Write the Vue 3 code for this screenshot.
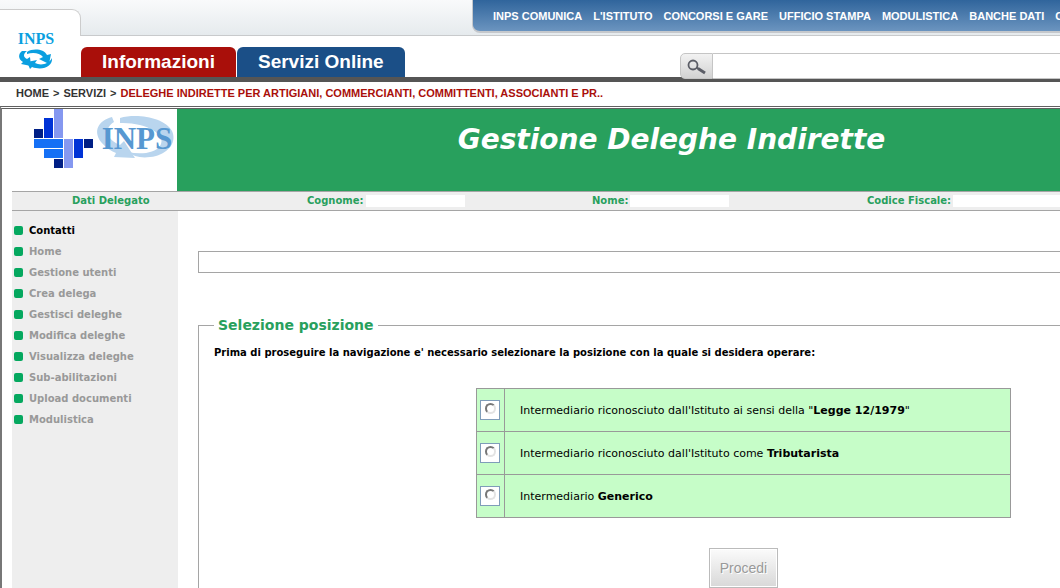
<script setup>
import { ref } from 'vue'

const query = ref('')
const position = ref('')
const topLinks = ['INPS COMUNICA', "L'ISTITUTO", 'CONCORSI E GARE', 'UFFICIO STAMPA', 'MODULISTICA', 'BANCHE DATI', 'C']
const menu = ['Contatti', 'Home', 'Gestione utenti', 'Crea delega', 'Gestisci deleghe', 'Modifica deleghe', 'Visualizza deleghe', 'Sub-abilitazioni', 'Upload documenti', 'Modulistica']
const options = [
  { id: 'legge', before: 'Intermediario riconosciuto dall\'Istituto ai sensi della "', strong: 'Legge 12/1979', after: '"' },
  { id: 'tributarista', before: "Intermediario riconosciuto dall'Istituto come ", strong: 'Tributarista', after: '' },
  { id: 'generico', before: 'Intermediario ', strong: 'Generico', after: '' },
]
</script>

<template>
  <div class="page">
    <header class="header">
      <a class="brand" href="#" aria-label="INPS">
        <svg width="36" height="48" viewBox="0 0 36 48">
          <text x="18" y="21" text-anchor="middle" class="brand-text">INPS</text>
          <path d="M4 28C0 31 0 36 5 39L3 41L13 43L12 34L9 36C5 34 5 31 9 28Z" fill="#0a9fe0" />
          <path d="M9 29C15 25 26 26 29 32L33 31L31 41L21 36L25 34C22 30 15 29 9 31Z" fill="#0a9fe0" />
          <path d="M34 35C35 43 25 48 14 44L12 46L9 39L19 37L17 40C23 43 31 41 34 35Z" fill="#0a9fe0" />
        </svg>
      </a>
      <div class="header-main">
        <div class="strip">
          <nav class="top-nav">
            <a v-for="l in topLinks" :key="l" href="#">{{ l }}</a>
          </nav>
        </div>
        <div class="tabs-row">
          <nav class="tabs">
            <a class="tab red" href="#">Informazioni</a>
            <a class="tab blue" href="#">Servizi Online</a>
          </nav>
          <form class="search" @submit.prevent>
            <button type="submit" aria-label="Cerca">
              <svg width="20" height="18" viewBox="0 0 20 18" fill="none" stroke="#5b5d66">
                <circle cx="6" cy="6" r="4.5" stroke-width="1.8" />
                <path d="M9.5 8.5L12 10" stroke-width="2" />
                <path d="M11 9.5L18 14" stroke-width="3" />
              </svg>
            </button>
            <input v-model="query" type="text" aria-label="Testo da cercare" />
          </form>
        </div>
      </div>
    </header>

    <nav class="crumbs">
      <a href="#">HOME</a><span>&gt;</span><a href="#">SERVIZI</a><span>&gt;</span>
      <a class="current" href="#">DELEGHE INDIRETTE PER ARTIGIANI, COMMERCIANTI, COMMITTENTI, ASSOCIANTI E PR..</a>
    </nav>

    <div class="frame">
      <div class="banner">
        <div class="banner-logo">
          <svg width="144" height="60" viewBox="0 0 144 60" role="img" aria-label="INPS">
            <rect x="0" y="20" width="9" height="9" fill="#001f85" />
            <rect x="10" y="9" width="9" height="20" fill="#0033d6" />
            <rect x="20" y="0" width="9" height="29" fill="#8598f0" />
            <rect x="0" y="30" width="29" height="9" fill="#1570f5" />
            <rect x="10" y="40" width="19" height="9" fill="#1570f5" />
            <rect x="20" y="50" width="9" height="9" fill="#001f85" />
            <rect x="30" y="30" width="9" height="29" fill="#8598f0" />
            <rect x="40" y="30" width="9" height="19" fill="#0033d6" />
            <rect x="50" y="30" width="9" height="9" fill="#001f85" />
            <path d="M78 8C64 12 59 22 67 33C71 38 77 42 82 44L80 48L101 49L90 32L86 36C73 31 69 20 80 13Z" fill="#b9d5ee" />
            <path d="M86 9C104 4 131 9 138 22C143 33 135 43 122 47C109 50 100 48 94 43C107 46 121 44 126 37C134 25 111 13 86 14Z" fill="#b9d5ee" />
            <text x="103" y="40" text-anchor="middle" class="banner-text">INPS</text>
          </svg>
        </div>
        <h1>Gestione Deleghe Indirette</h1>
      </div>

      <div class="data-bar">
        <div class="data-title">Dati Delegato</div>
        <div class="datum">Cognome:<span class="blank"></span></div>
        <div class="datum">Nome:<span class="blank"></span></div>
        <div class="datum">Codice Fiscale:<span class="blank wide"></span></div>
      </div>

      <div class="body">
        <nav class="side">
          <ul>
            <li v-for="(m, i) in menu" :key="m">
              <a href="#" :class="{ active: i === 0 }">{{ m }}</a>
            </li>
          </ul>
        </nav>
        <main class="content">
          <div class="message"></div>
          <form @submit.prevent>
            <fieldset>
              <legend>Selezione posizione</legend>
              <p>Prima di proseguire la navigazione e' necessario selezionare la posizione con la quale si desidera operare:</p>
              <div class="choice">
                <table>
                  <tbody>
                    <tr v-for="o in options" :key="o.id">
                      <td class="pick"><input :id="o.id" v-model="position" type="radio" name="position" :value="o.id" /></td>
                      <td><label :for="o.id">{{ o.before }}<b>{{ o.strong }}</b>{{ o.after }}</label></td>
                    </tr>
                  </tbody>
                </table>
                <button class="go" type="submit" :disabled="!position">Procedi</button>
              </div>
            </fieldset>
          </form>
        </main>
      </div>
    </div>
  </div>
</template>

<style>
body { margin: 0; background: #fff; }
</style>

<style scoped>
.page {
  display: flex;
  flex-direction: column;
  min-height: 100vh;
  overflow: hidden;
  font-family: "DejaVu Sans", Verdana, sans-serif;
  font-size: 10px;
  color: #000;
}
a { text-decoration: none; color: inherit; }
.header {
  display: flex;
  background: linear-gradient(#f9fafb, #e5eaed) 0 0 / 100% 36px no-repeat;
  border-bottom: 5px solid #555;
  font-family: "Liberation Sans", Arial, sans-serif;
}
.brand {
  box-sizing: border-box;
  width: 81px;
  margin-top: 9px;
  padding: 13px 0 0 18px;
  border: 1px solid #ccc;
  border-width: 1px 1px 0 0;
  border-radius: 0 9px 0 0;
  background: #fff;
}
.brand svg { display: block; }
.brand-text { font: bold 16px "Liberation Serif", serif; fill: #0a9fe0; }
.header-main { flex: 1; min-width: 0; margin-left: -1px; }
.strip {
  box-sizing: border-box;
  height: 36px;
  margin-left: 1px;
  padding-left: 391px;
  border-bottom: 1px solid #c8cacc;
}
.top-nav {
  display: flex;
  gap: 11px;
  height: 31px;
  padding-left: 20px;
  overflow: hidden;
  white-space: nowrap;
  border: 1px solid #c5c8cc;
  border-width: 0 0 2px 1px;
  border-radius: 0 0 0 8px;
  background: linear-gradient(#30659c, #6b94bf);
  color: #fff;
  font-size: 11px;
  font-weight: bold;
  line-height: 32px;
}
.top-nav a { flex: none; }
.tabs-row {
  display: flex;
  align-items: flex-end;
  height: 41px;
  padding-left: 1px;
  background: #fff;
}
.tabs { display: flex; gap: 1px; }
.tab {
  height: 30px;
  padding: 0 21px;
  border-radius: 6px 6px 0 0;
  color: #fff;
  font-size: 19px;
  font-weight: bold;
  line-height: 29px;
}
.red { background: #a90f0a; }
.blue { background: #1b4f87; }
.search {
  flex: 1;
  display: flex;
  height: 26px;
  margin: 0 0 -2px 275px;
}
.search button {
  box-sizing: border-box;
  width: 33px;
  padding: 4px 0 0 6px;
  border: 1px solid #c5c5c5;
  border-radius: 5px 0 0 5px;
  background: linear-gradient(#f2f2f2, #d2d2d2);
}
.search svg { display: block; }
.search input {
  flex: 1;
  min-width: 0;
  padding: 0 6px;
  border: 1px solid #c5c5c5;
  border-width: 1px 0;
  background: #fff;
}
.crumbs {
  display: flex;
  gap: 4px;
  height: 24px;
  padding-left: 16px;
  font: bold 11px/22px "Liberation Sans", Arial, sans-serif;
  color: #333;
  white-space: nowrap;
}
.current { color: #a90f0a; }
.frame {
  flex: 1;
  display: flex;
  flex-direction: column;
  padding-left: 10px;
  border-top: 3px double #606060;
  border-left: 2px solid #777;
}
.banner { display: flex; height: 82px; }
.banner-logo { width: 143px; padding-left: 22px; }
.banner-logo svg { display: block; }
.banner-text { font: bold 31px "Liberation Serif", serif; fill: #5798d1; }
h1 {
  flex: 1;
  box-sizing: border-box;
  margin: 0;
  padding: 0 0 18px 106px;
  background: #28a05d;
  color: #fff;
  font-size: 28px;
  font-style: italic;
  line-height: 62px;
  text-align: center;
  white-space: nowrap;
}
.data-bar {
  display: grid;
  grid-template-columns: 295fr 285fr 275fr 193fr;
  border: 1px solid #a5a5a5;
  border-width: 1px 0;
  background: #eee;
  color: #28a05d;
  font-weight: bold;
  line-height: 18px;
}
.data-title { padding-left: 60px; }
.datum { display: flex; align-items: center; gap: 2px; white-space: nowrap; }
.blank { width: 99px; height: 12px; background: #fff; }
.wide { flex: 1; }
.body { flex: 1; display: flex; }
.side { width: 166px; background: #eee; }
.side ul { margin: 0; padding: 9px 0 0 2px; list-style: none; }
.side li {
  display: flex;
  align-items: center;
  gap: 6px;
  height: 21px;
  color: #999;
  font-weight: bold;
}
.side li::before { content: ""; width: 9px; height: 9px; border-radius: 2px; background: #05a85f; }
.active { color: #000; }
.content { flex: 1; min-width: 0; padding: 40px 0 0 20px; }
.message { height: 20px; border: 1px solid #a5a5a5; border-right: 0; }
fieldset {
  min-width: 0;
  margin: 43px 0 0;
  padding: 0 0 0 15px;
  border: 1px solid #a5a5a5;
  border-width: 1px 0 0 1px;
}
legend { padding: 0 4px; color: #28a05d; font-size: 14px; font-weight: bold; line-height: 18px; }
p { margin: 11px 0 0; font-weight: bold; line-height: 16px; white-space: nowrap; }
.choice {
  display: flex;
  flex-direction: column;
  align-items: center;
  margin: 27px 49px 0 262px;
}
table { width: 100%; border-collapse: collapse; background: #c6fdc8; font-size: 11px; }
td { height: 42px; padding: 0 0 0 15px; border: 1px solid #999; }
.pick { width: 24px; padding: 0 0 0 3px; }
.pick input {
  appearance: none;
  display: block;
  box-sizing: border-box;
  width: 20px;
  height: 20px;
  margin: 0;
  padding: 2px 0 0 4px;
  border: 1px solid #7f9db9;
  background: #fff;
}
.pick input::before {
  content: "";
  display: block;
  box-sizing: border-box;
  width: 11px;
  height: 11px;
  border: 2px solid;
  border-color: #777 #e3e3e3 #e3e3e3 #777;
  border-radius: 50%;
}
.pick input:checked::before { background: #333; }
.go {
  height: 40px;
  margin-top: 30px;
  padding: 0 10px;
  border: 1px solid #bbb;
  background: linear-gradient(#fbfbfb, #d8d8d8);
  box-shadow: inset 0 0 0 1px #fff;
  color: #999;
  font: 14px "Liberation Sans", Arial, sans-serif;
  text-shadow: 1px 1px 0 #fff;
}
</style>
